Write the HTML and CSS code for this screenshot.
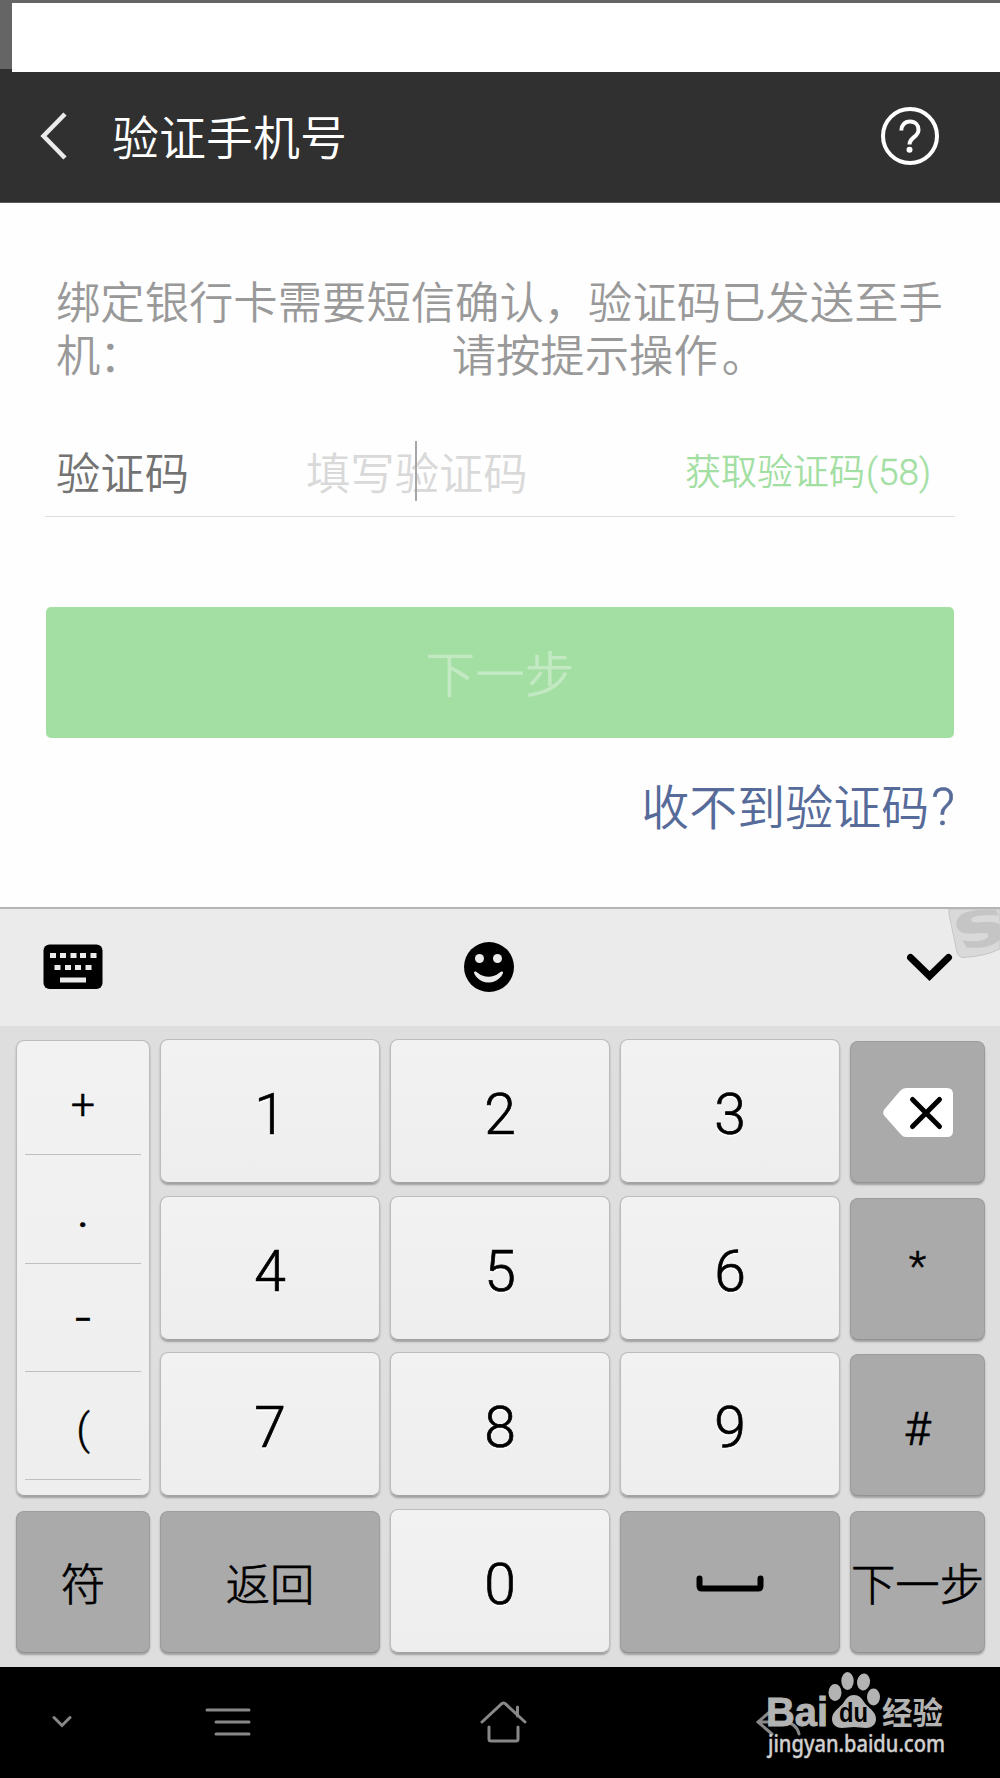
FILE: index.html
```html
<!DOCTYPE html>
<html lang="zh-CN">
<head>
  <meta charset="UTF-8">
  <meta name="viewport" content="width=device-width, initial-scale=1">
  <title>验证手机号</title>
  <link rel="stylesheet" href="styles.css">
</head>
<body>
  <div class="status-bar"><div class="status-blank"></div></div>

  <header class="header">
    <svg class="back" width="28" height="52" viewBox="0 0 28 52"><path d="M25 4 3.5 26 25 48"/></svg>
    <h1>验证手机号</h1>
    <svg class="help" width="60" height="60" viewBox="0 0 60 60">
      <circle cx="30" cy="30" r="27"/>
      <path d="M21.3 24.5c0-5 3.400-8.900 8.700-8.900s8.500 3.500 8.500 8.300c0 7-9 7.500-9 14.500"/>
      <circle class="dot" cx="29.500" cy="43.700" r="3"/>
    </svg>
  </header>

  <main class="content">
    <p class="hint">绑定银行卡需要短信确认，验证码已发送至手<br>机<span class="colon">：</span><span class="phone"></span>请按提示操作<span class="stop">。</span></p>

    <div class="field">
      <label>验证码</label>
      <div class="code-input">填写验证码<span class="caret"></span></div>
      <span class="resend">获取验证码<span class="count">(58)</span></span>
    </div>

    <button type="button" class="next">下一步</button>
    <a class="help-link">收不到验证码<span>?</span></a>
  </main>

  <section class="keyboard">
    <div class="toolbar">
      <svg width="60" height="46" viewBox="0 0 60 46">
        <rect x=".5" y=".5" width="59" height="44.500" rx="6"/>
        <path class="hole" d="M7 9h6v5H7zM17 9h6v5h-6zM27.500 9h6v5h-6zM37 9h6v5h-6zM47.500 9h6v5h-6zM11.500 21h6v5h-6zM22 21h6v5h-6zM32 21h6v5h-6zM42.500 21h6v5h-6zM17 33.500h26v5H17z"/>
      </svg>
      <svg class="smiley" width="52" height="52" viewBox="0 0 52 52">
        <circle cx="26" cy="26" r="25"/>
        <circle class="hole" cx="16.500" cy="17.500" r="4.500"/>
        <circle class="hole" cx="34.500" cy="17.500" r="4.500"/>
        <path class="hole" d="M11 31c1-1 2.500-.5 4 1 6 5 15 5 21 0 1.500-1.500 3.500-2 4-1 .8 2-5 10.500-14.500 10.500S10.500 33 11 31z"/>
      </svg>
      <svg width="46" height="30" viewBox="0 0 46 30"><path class="stroke" d="M3.500 5.500l19 18.500 19-18.500"/></svg>
      <svg class="sogou" width="52" height="50" viewBox="0 0 52 50">
        <path class="badge" d="M1 0v5l8 38q2 6 7 5.500Q38 47 52 40V0z"/>
        <path class="swirl" d="M48 1Q29-1 16 4 7 9 8.500 17c1 6 8 8.500 18 7.500 9-1 14-1 14 2 0 5-13 7-26 5l4 7c12 1 22 0 30-5l3.500-3V16q-4-4-16-3c-10 1-13 0-13-2.500 1-4 12-5 28-4z"/>
      </svg>
    </div>

    <div class="keys">
      <div class="symbols">
        <span>+</span>
        <span class="period">.</span>
        <span class="minus">-</span>
        <span>(</span>
      </div>
      <div class="key">1</div>
      <div class="key">2</div>
      <div class="key">3</div>
      <div class="key dark">
        <svg class="delete" width="72" height="52" viewBox="0 0 72 52">
          <path d="M24 1h41q6 0 6 6v37q0 6-6 6H24q-3 0-5-2.500L2.500 29q-2.500-3-.2-6.500L18 4q3-3 6-3z"/>
          <path class="cross" d="M30.500 12.500l27 27M57.500 12.500l-27 27"/>
        </svg>
      </div>
      <div class="key">4</div>
      <div class="key">5</div>
      <div class="key">6</div>
      <div class="key dark star">*</div>
      <div class="key">7</div>
      <div class="key">8</div>
      <div class="key">9</div>
      <div class="key dark hash">#</div>
      <div class="key dark">符</div>
      <div class="key dark">返回</div>
      <div class="key">0</div>
      <div class="key dark">
        <svg class="space" width="68" height="18" viewBox="0 0 68 18"><path d="M3.500 3.500V11q0 2.500 2.500 2.500h56q2.500 0 2.500-2.500V3.500"/></svg>
      </div>
      <div class="key dark">下一步</div>
    </div>
  </section>

  <nav class="nav-bar">
    <svg class="nav-hide" width="20" height="14" viewBox="0 0 20 14"><path d="M2 2.500l8 8 8-8"/></svg>
    <svg class="nav-menu" width="48" height="30" viewBox="0 0 48 30"><path d="M2 3h42M11 15h33M11 27h33"/></svg>
    <svg class="nav-home" width="48" height="44" viewBox="0 0 48 44"><path d="M2 22L22 3.500q1.500-1 3 0L45 22M37.500 7v9M9 27v12q0 2 2 2h25q2 0 2-2V27"/></svg>
    <svg class="nav-back" width="46" height="30" viewBox="0 0 46 30"><path d="M16 3L2 15l14 12M2 15h25q13 0 16 12"/></svg>

    <!-- 水印 -->
    <svg class="watermark" width="200" height="95" viewBox="0 0 200 95">
      <text class="brand" x="16" y="54" textLength="62" lengthAdjust="spacingAndGlyphs">Bai</text>
      <ellipse cx="85" cy="20.500" rx="6.500" ry="8.500"/>
      <ellipse cx="97.500" cy="9" rx="6.200" ry="9"/>
      <ellipse cx="113.500" cy="10" rx="6.500" ry="8.500" transform="rotate(8 113.500 10)"/>
      <ellipse cx="123.500" cy="25" rx="6.500" ry="8.500"/>
      <path d="M104 23c5 0 8 3.500 10 7 4 6 12 9 12 17 0 6-5 9-10 9-4 0-8-1-12-1s-8 1-12 1c-5 0-10-3-10-9 0-8 8-11 12-17 2-3.500 5-7 10-7z"/>
      <text class="du" x="89" y="50" textLength="29" lengthAdjust="spacingAndGlyphs">du</text>
      <text class="cn" x="132" y="52" textLength="61" lengthAdjust="spacingAndGlyphs">经验</text>
      <text class="url" x="18" y="80" textLength="177" lengthAdjust="spacingAndGlyphs">jingyan.baidu.com</text>
    </svg>
  </nav>
</body>
</html>
```

FILE: styles.css
```css
* {
  margin: 0;
  padding: 0;
  box-sizing: border-box;
}

body {
  width: 1000px;
  height: 1778px;
  overflow: hidden;
  background-color: #fefefe;
  font-family: "Noto Sans CJK SC", sans-serif;
  font-weight: 350;
  display: flex;
  flex-direction: column;
}

svg {
  display: block;
  flex: none;
}

.status-bar {
  height: 72px;
  padding: 3px 0 0 12px;
  background: linear-gradient(#656565 69px, #303030 69px);
}

.status-blank {
  height: 69px;
  background-color: #fff;
}

.header {
  height: 131px;
  padding: 0 60px 2px 40px;
  background-color: #303030;
  border-bottom: 1px solid #5a5a5a;
  display: flex;
  align-items: center;
}

.header h1 {
  margin-left: 44px;
  padding-bottom: 3px;
  flex: 1;
  color: #fff;
  font-size: 47px;
  font-weight: 350;
  line-height: 60px;
}

.back path {
  fill: none;
  stroke: #ebebeb;
  stroke-width: 4.5;
}

.help circle,
.help path {
  fill: none;
  stroke: #fff;
  stroke-width: 4;
}

.help .dot {
  fill: #fff;
  stroke: none;
}

.content {
  height: 704px;
  padding: 71px 45px 0;
  display: flex;
  flex-direction: column;
}

.hint {
  height: 106px;
  padding-left: 11px;
  color: #999;
  font-size: 44.35px;
  line-height: 53px;
  white-space: nowrap;
}

.colon {
  margin-left: -1px;
}

.stop {
  margin-left: 4px;
}

.phone {
  display: inline-block;
  width: 308px;
}

.field {
  height: 97px;
  margin-top: 40px;
  padding: 6px 24px 0 11px;
  border-bottom: 1px solid #dcdcdc;
  display: flex;
  align-items: center;
  font-size: 44.35px;
  line-height: 60px;
  color: #737373;
}

.field label {
  width: 250px;
}

.code-input {
  position: relative;
  flex: 1;
  color: #d9d9d9;
}

.caret {
  position: absolute;
  left: 109px;
  top: 0;
  width: 2px;
  height: 60px;
  background-color: #a6a6a6;
}

.resend {
  color: #a3dfa3;
  font-size: 36px;
}

.count {
  margin-left: 1px;
  font-family: Roboto, sans-serif;
  font-size: 37px;
  -webkit-text-stroke: 0.4px #a3dfa3;
}

.next {
  width: 908px;
  height: 131px;
  margin: 90px auto 0;
  padding-bottom: 4px;
  border: none;
  border-radius: 5px;
  background-color: #a3dfa3;
  color: #c3e9c3;
  font-family: inherit;
  font-size: 49.7px;
  font-weight: 350;
}

.help-link {
  margin-top: 36px;
  align-self: flex-end;
  color: #576b9a;
  font-size: 48px;
  line-height: 60px;
}

.help-link span {
  margin-left: 2px;
  font-family: Roboto, sans-serif;
  font-size: 52px;
  -webkit-text-stroke: 0.6px #576b9a;
}

.keyboard {
  height: 760px;
  background-color: #dedede;
}

.toolbar {
  position: relative;
  height: 119px;
  padding: 0 47px 2px 43px;
  border-top: 2px solid #b5b5b5;
  background-color: #ebebeb;
  display: flex;
  justify-content: space-between;
  align-items: center;
}

.smiley {
  margin-right: 33px;
}

.toolbar .hole {
  fill: #ebebeb;
}

.toolbar .stroke {
  fill: none;
  stroke: #000;
  stroke-width: 7;
  stroke-linecap: round;
}

/* logo clipped by the right edge */
.sogou {
  position: absolute;
  right: 0;
  top: 0;
}

.badge {
  fill: #d9d9d9;
  stroke: #c6c6c6;
}

.swirl {
  fill: #c5c5c5;
}

.keys {
  padding: 13px 15px 0 16px;
  display: grid;
  grid-template-columns: 134px repeat(3, 1fr) 135px;
  grid-auto-rows: 144px;
  gap: 12.5px 10px;
}

.key,
.symbols {
  border: 1px solid #bcbcbc;
  border-bottom-color: #a2a2a2;
  border-radius: 8px;
  background: linear-gradient(#f2f2f2, #eee);
  box-shadow: 0 2px 2px #a0a0a0;
  color: #000;
}

.key {
  padding-top: 7px;
  display: flex;
  justify-content: center;
  align-items: center;
  font-family: Roboto, "Noto Sans CJK SC", sans-serif;
  font-size: 57px;
  font-weight: 300;
  -webkit-text-stroke: 0.7px #000;
  white-space: nowrap;
  text-shadow: 0 2px 1px #fff;
}

.dark {
  margin-top: 2px;
  padding-top: 0;
  border-color: #9c9c9c;
  border-bottom-color: #929292;
  background: #aaa;
  font-size: 44.35px;
  text-shadow: none;
}

.star {
  padding-bottom: 4px;
  font-size: 40px;
}

.hash {
  padding-top: 8px;
  font-size: 46px;
}

.symbols {
  grid-row: span 3;
  margin-top: 1px;
  padding: 6px 8px 0;
  font-family: Roboto, sans-serif;
  font-size: 43px;
  font-weight: 300;
  -webkit-text-stroke: 0.5px #000;
}

.symbols span {
  display: block;
  height: 108.3px;
  border-bottom: 1px solid #c0c0c0;
  text-align: center;
  line-height: 114px;
}

.symbols .period {
  font-weight: 400;
  line-height: 115px;
}

.symbols .minus {
  font-family: Inter, sans-serif;
  font-size: 44px;
  line-height: 106px;
}

.delete {
  margin-top: 2px;
  fill: #fff;
}

.delete .cross {
  stroke: #000;
  stroke-width: 5;
  stroke-linecap: round;
}

.space {
  margin-top: 4px;
}

.space path {
  fill: none;
  stroke: #000;
  stroke-width: 6;
  stroke-linecap: round;
}

.nav-bar {
  position: relative;
  height: 111px;
  padding: 0 0 2px 52px;
  background-color: #000;
  display: flex;
  align-items: center;
}

.nav-bar path {
  fill: none;
  stroke: #888;
  stroke-width: 3;
  stroke-linecap: round;
}

.nav-menu {
  margin-left: 133px;
}

.nav-home {
  margin-left: 227px;
}

.nav-back {
  margin-left: 228px;
}

.watermark {
  position: absolute;
  left: 750px;
  top: 5px;
  fill: #b3b3b3;
}

.nav-bar .watermark path {
  fill: #b3b3b3;
  stroke: none;
}

.brand {
  font: 700 41px "Liberation Sans", sans-serif;
  stroke: #b3b3b3;
  stroke-width: 1px;
}

.du {
  fill: #000;
  font: 700 28px "Liberation Sans", sans-serif;
}

.cn {
  font: 700 31px "Noto Sans CJK SC", sans-serif;
}

.url {
  fill: #d0d0d0;
  font: 500 24px "Noto Sans", sans-serif;
  stroke: #d0d0d0;
  stroke-width: 0.4px;
}
```
